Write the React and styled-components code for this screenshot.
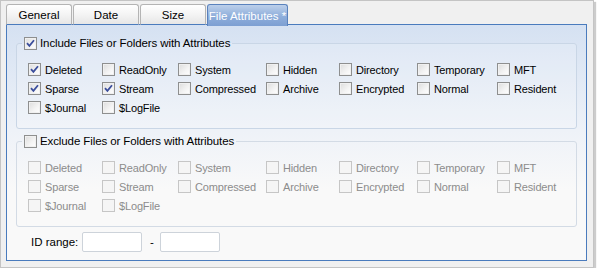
import React from 'react';
import styled, { createGlobalStyle } from 'styled-components';

const GlobalStyle = createGlobalStyle`
  html, body {
    margin: 0;
    padding: 0;
    background: #ffffff;
  }
  body {
    font-family: "Liberation Sans", Arial, sans-serif;
    font-size: 11px;
    color: #000;
  }
`;

const includeAttrs = [
  ['Deleted', true], ['ReadOnly', false], ['System', false], ['Hidden', false],
  ['Directory', false], ['Temporary', false], ['MFT', false],
  ['Sparse', true], ['Stream', true], ['Compressed', false], ['Archive', false],
  ['Encrypted', false], ['Normal', false], ['Resident', false],
  ['$Journal', false], ['$LogFile', false],
];

const tabs = [
  { label: 'General', active: false },
  { label: 'Date', active: false },
  { label: 'Size', active: false },
  { label: 'File Attributes *', active: true },
];

function Check({ checked, disabled }) {
  return (
    <Box $disabled={disabled}>
      {checked && (
        <svg width="9" height="9" viewBox="0 0 9 9">
          <path d="M1 4.2 L3.4 6.8 L8 1.2" fill="none" stroke="#3b4e9c" strokeWidth="1.8" />
        </svg>
      )}
    </Box>
  );
}

function AttrGroup({ title, checked, disabled, items }) {
  return (
    <Group $disabled={disabled}>
      <Legend>
        <Check checked={checked} />
        <span>{title}</span>
      </Legend>
      <AttrGrid>
        {items.map(([name, on]) => (
          <AttrItem key={name} $disabled={disabled}>
            <Check checked={on} disabled={disabled} />
            <span>{name}</span>
          </AttrItem>
        ))}
      </AttrGrid>
    </Group>
  );
}

export default function App() {
  return (
    <>
      <GlobalStyle />
      <Frame>
        <TabStrip>
          {tabs.map((t) => (
            <Tab key={t.label} $active={t.active}>{t.label}</Tab>
          ))}
        </TabStrip>
        <Panel>
          <AttrGroup
            title="Include Files or Folders with Attributes"
            checked
            items={includeAttrs}
          />
          <AttrGroup
            title="Exclude Files or Folders with Attributes"
            disabled
            items={includeAttrs.map(([n]) => [n, false])}
          />
          <RangeRow>
            <RangeLabel>ID range:</RangeLabel>
            <TextInput />
            <Dash>-</Dash>
            <TextInput />
          </RangeRow>
        </Panel>
      </Frame>
    </>
  );
}

const Frame = styled.div`
  box-sizing: border-box;
  width: 594px;
  height: 268px;
  background: #f0f0f0;
  border: 1px solid #c4c4c4;
  box-shadow: 2px 2px 1px rgba(0, 0, 0, 0.2);
  padding: 3px 0 0 5px;
`;

const TabStrip = styled.div`
  display: flex;
  align-items: flex-end;
  gap: 1px;
  height: 21px;
  position: relative;
  z-index: 1;
  margin-bottom: -1px;
`;

const Tab = styled.div`
  box-sizing: border-box;
  width: ${(p) => (p.$active ? '81px' : '66px')};
  height: ${(p) => (p.$active ? '22px' : '21px')};
  margin-bottom: ${(p) => (p.$active ? '-1px' : '0')};
  display: flex;
  align-items: center;
  justify-content: center;
  padding-top: 1px;
  border: 1px solid ${(p) => (p.$active ? '#5a82bd' : '#b4b4b4')};
  border-bottom: ${(p) => (p.$active ? 'none' : '1px solid #4a7bbd')};
  border-radius: 3px 3px 0 0;
  background: ${(p) =>
    p.$active
      ? 'linear-gradient(#bccfea, #8eaedb 55%, #7d9fd2)'
      : 'linear-gradient(#ffffff, #f4f4f4 50%, #e6e6e6)'};
  color: ${(p) => (p.$active ? '#ffffff' : '#000000')};
  white-space: nowrap;
  font-size: 11.5px;
`;

const Panel = styled.div`
  box-sizing: border-box;
  width: 581px;
  height: 237px;
  border: 1px solid #4a7bbd;
  background: linear-gradient(#d5e1f2, #eef2f8 45%, #f9f9f9 70%);
  padding: 11px 9px 0 9px;
  display: flex;
  flex-direction: column;
`;

const Group = styled.fieldset`
  margin: 0 0 5px 0;
  padding: 10px 5px 11px 5px;
  border: 1px solid ${(p) => (p.$disabled ? '#d3dbe5' : '#c9d6e6')};
  border-radius: 3px;
  background: ${(p) => (p.$disabled ? 'transparent' : 'rgba(255,255,255,0.18)')};
  min-width: 0;
`;

const Legend = styled.legend`
  padding: 0 2px;
  height: 14px;
  display: flex;
  align-items: center;
  gap: 3px;
  color: #000;
  font-size: 11.5px;
  letter-spacing: -0.1px;
`;

const AttrGrid = styled.div`
  display: grid;
  grid-template-columns: 74px 76px 88px 73px 78px 80px auto;
  grid-auto-rows: 19px;
  margin-left: 6px;
`;

const AttrItem = styled.div`
  display: flex;
  align-items: center;
  gap: 4px;
  color: ${(p) => (p.$disabled ? '#8c8c8c' : '#000')};
  white-space: nowrap;
  font-size: 11px;
  letter-spacing: -0.15px;
`;

const Box = styled.span`
  box-sizing: border-box;
  flex: none;
  width: 13px;
  height: 13px;
  display: inline-flex;
  align-items: center;
  justify-content: center;
  border: 1px solid ${(p) => (p.$disabled ? '#c6c6c6' : '#8e8f8f')};
  background: ${(p) =>
    p.$disabled
      ? '#f5f5f5'
      : 'linear-gradient(135deg, #dcdcdc, #f4f4f4 60%, #ffffff)'};
  box-shadow: inset 0 0 0 1px ${(p) => (p.$disabled ? '#f5f5f5' : '#f0f0f0')};
`;

const RangeRow = styled.div`
  display: flex;
  align-items: center;
  margin-left: 15px;
  height: 20px;
  font-size: 11.5px;
`;

const RangeLabel = styled.span`
  width: 51px;
`;

const TextInput = styled.div`
  box-sizing: border-box;
  width: 60px;
  height: 20px;
  background: #fff;
  border: 1px solid #cdd3da;
  border-radius: 2px;
`;

const Dash = styled.span`
  width: 18px;
  padding-left: 8px;
  box-sizing: border-box;
`;
